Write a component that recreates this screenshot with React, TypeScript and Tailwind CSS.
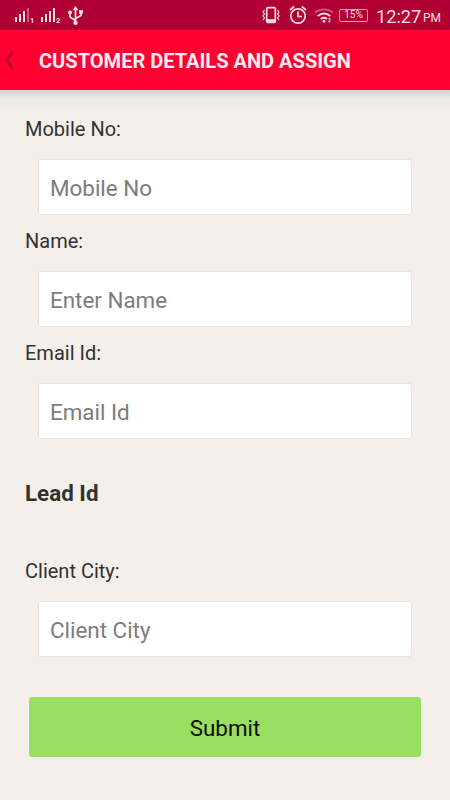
interface FieldProps {
  label: string;
  placeholder: string;
}

function SignalIcon({ sim, weak = false }: { sim: string; weak?: boolean }) {
  return (
    <svg width="21" height="18" viewBox="0 0 21 18" fill="#fbdfe6">
      <rect x="1" y="10" width="2" height="5" />
      <rect x="5" y="7" width="2" height="8" />
      <rect x="9" y="4" width="2" height="11" />
      <rect x="13" y="1" width="2" height="14" opacity={weak ? 0.4 : 1} />
      <text x="16" y="16" fontSize="7.5" fontWeight="700">{sim}</text>
    </svg>
  );
}

function UsbIcon() {
  return (
    <svg width="18" height="20" viewBox="0 0 18 20" fill="none" stroke="#fbdfe6" strokeWidth="1.7">
      <path d="M8.5 3v13M8.5 14.500 3 11V7M8.5 12.500 14 9.500V6" />
      <path d="M8.500 0 11.500 4.200H5.500z" fill="#fbdfe6" stroke="none" />
      <circle cx="8.500" cy="16.800" r="2.200" fill="#fbdfe6" stroke="none" />
      <circle cx="3" cy="6.500" r="2" fill="#fbdfe6" stroke="none" />
      <path d="M12.100 4h3.800v3.800h-3.800z" fill="#fbdfe6" stroke="none" />
    </svg>
  );
}

function VibrateIcon() {
  return (
    <svg width="18" height="18" viewBox="0 0 18 18" fill="none" stroke="#fbdfe6">
      <rect x="4.700" y="1.700" width="8.600" height="14.600" rx="1" strokeWidth="1.700" />
      <path d="M5 14.500h8" strokeWidth="2.600" />
      <path d="M2.500 4 1 6l1.500 2L1 10l1.500 2L1 14M15.500 4 17 6l-1.500 2 1.500 2-1.500 2 1.500 2" strokeWidth="1.200" />
    </svg>
  );
}

function AlarmIcon() {
  return (
    <svg width="18" height="20" viewBox="0 0 18 20" fill="none" stroke="#fbdfe6" strokeWidth="1.700">
      <circle cx="9" cy="11" r="7.200" />
      <path d="M9 6.500V11.500h4M1 5 5.200 1.500M17 5l-4.200-3.500" />
    </svg>
  );
}

function WifiIcon() {
  return (
    <svg width="20" height="16" viewBox="0 0 20 16" fill="none" stroke="#fbdfe6" strokeWidth="1.800">
      <path d="M1 4.500C6.500.3 13.500.3 19 4.500" opacity="0.4" />
      <path d="M3.800 8c4-3.200 8.400-3.200 12.400 0M6.800 11c2.200-1.700 4.200-1.700 6.200 0" />
      <circle cx="10" cy="13.300" r="1.400" fill="#fbdfe6" stroke="none" />
      <path d="m14 11.500 1.500-2 1.500 2zM14 12.700h3l-1.500 2z" fill="#fbdfe6" stroke="none" />
    </svg>
  );
}

function StatusBar() {
  return (
    <div className="flex h-[30px] items-center bg-[#b00033] text-[#fbdfe6]">
      <div className="flex items-center pl-3.5 pt-0.5">
        <SignalIcon sim="1" weak />
        <div className="ml-[5px]"><SignalIcon sim="2" /></div>
        <div className="ml-1.5"><UsbIcon /></div>
      </div>
      <div className="ml-auto flex items-center pr-[10px]">
        <VibrateIcon />
        <div className="ml-[9px]"><AlarmIcon /></div>
        <div className="ml-[7px] pt-0.5"><WifiIcon /></div>
        <span className="ml-[5px] flex h-[13px] w-[29px] items-center justify-center rounded-[2px] border border-[#e998ad] text-[10px] leading-none">15%</span>
        <span className="ml-2 w-[44px] whitespace-nowrap pt-[3px] text-[18.200px] leading-[30px]">12:27</span>
        <span className="ml-[3px] w-[17px] whitespace-nowrap pt-[5px] text-[12px]">PM</span>
      </div>
    </div>
  );
}

function Header() {
  return (
    <header className="flex h-[60px] items-center bg-[#ff0033]">
      <svg className="ml-[5px] shrink-0" width="9" height="19" viewBox="0 0 9 19" fill="none" stroke="#b80029" strokeWidth="2.400">
        <path d="M7.500.8C5.500 4.500 3.800 7 2 9.500 3.800 12 5.500 14.500 7.500 18.200" />
      </svg>
      <h1 className="ml-[25px] whitespace-nowrap pt-0.5 text-[20.050px] font-bold text-[#ffeef1]">CUSTOMER DETAILS AND ASSIGN</h1>
    </header>
  );
}

function Field({ label, placeholder }: FieldProps) {
  return (
    <div className="h-28">
      <label className="block h-8 pl-[25px] text-[20px] leading-8 text-[#33312f]">{label}</label>
      <input
        type="text"
        placeholder={placeholder}
        className="ml-[38px] mt-3.5 block h-14 w-[374px] rounded-[2px] border border-[#e9e5e2] bg-white pl-[11px] pr-3 pt-0.5 text-[22.400px] text-[#33312f] placeholder:text-[#7c7c7c] focus:outline-none"
      />
    </div>
  );
}

export default function App() {
  return (
    <div className="flex h-[800px] w-[450px] flex-col overflow-hidden bg-[#f4efeb] font-['Roboto',sans-serif]">
      <StatusBar />
      <Header />
      <div className="h-[23px] shrink-0 bg-linear-to-b from-[#d8d3d0] via-[#efeae6] via-40% to-[#f4efeb]" />
      <main>
        <Field label="Mobile No:" placeholder="Mobile No" />
        <Field label="Name:" placeholder="Enter Name" />
        <Field label="Email Id:" placeholder="Email Id" />
        <h2 className="mb-[46px] mt-7 pl-[25px] text-[22.400px] font-bold leading-8 text-[#33312f]">Lead Id</h2>
        <Field label="Client City:" placeholder="Client City" />
        <button type="button" className="ml-[29px] mt-[30px] block h-[60px] w-[392px] rounded-[3px] bg-[#99df62] pt-1 text-[22.400px] text-[#080c04]">
          Submit
        </button>
      </main>
    </div>
  );
}
